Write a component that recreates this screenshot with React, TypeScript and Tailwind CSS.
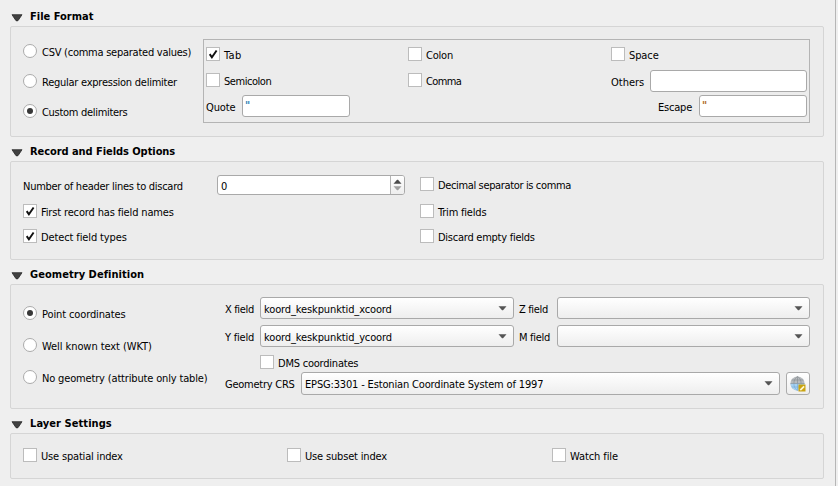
import type { ReactNode } from "react";

function Label({ children, className = "" }: { children: ReactNode; className?: string }) {
  return <span className={`block shrink-0 whitespace-nowrap ${className}`}>{children}</span>;
}

function Section({ title, headerClass, boxClass, titleClass = "", children }: { title: string; headerClass: string; boxClass: string; titleClass?: string; children: ReactNode }) {
  return (
    <section>
      <h2 className={`flex items-start pl-[11px] font-bold ${headerClass}`}>
        <svg width="12" height="8" viewBox="0 0 12 8" className="mt-[4px] mr-[7px] shrink-0">
          <path d="M1 .7h10L7.2 6.4q-1.2 1.2-2.4 0z" fill="#414141" stroke="#2b2b2b" strokeWidth=".8" />
        </svg>
        <Label className={titleClass}>{title}</Label>
      </h2>
      <div className={`ml-[10px] w-[814px] rounded-[2px] border border-[#d5d5d5] bg-[#ececec] ${boxClass}`}>{children}</div>
    </section>
  );
}

function Check({ label, checked = false, className = "", textClass = "" }: { label: string; checked?: boolean; className?: string; textClass?: string }) {
  return (
    <label className={`flex h-[14px] items-center ${className}`}>
      <span className="mr-[4px] h-[14px] w-[14px] shrink-0 border border-[#bcbcbc] bg-white">
        {checked && (
          <svg width="12" height="12" viewBox="0 0 12 12">
            <path d="M2.7 6.1l2.2 3.3L9.6 2.5" fill="none" stroke="#111" strokeWidth="1.9" />
          </svg>
        )}
      </span>
      <Label className={`mt-[4px] ${textClass}`}>{label}</Label>
    </label>
  );
}

function Radio({ label, checked = false, textClass = "" }: { label: string; checked?: boolean; textClass?: string }) {
  return (
    <label className="flex h-[14px] items-center">
      <span className="mr-[5px] flex h-[14px] w-[14px] shrink-0 items-center justify-center rounded-full border border-[#ababab] bg-white">
        {checked && <span className="h-[6px] w-[6px] rounded-full bg-[#383838]" />}
      </span>
      <Label className={`mt-[4px] ${textClass}`}>{label}</Label>
    </label>
  );
}

function Arrow({ className = "" }: { className?: string }) {
  return (
    <svg width="9" height="5" viewBox="0 0 9 5" className={`shrink-0 ${className}`}>
      <path d="M.5 .3h8L5 4.2h-1z" fill="currentColor" />
    </svg>
  );
}

function Combo({ value = "", className, textClass = "" }: { value?: string; className: string; textClass?: string }) {
  return (
    <div className={`flex shrink-0 items-center justify-between rounded-[3px] border border-[#a9a9a9] bg-linear-to-b from-white to-[#eeeeee] pr-[6px] pl-[3px] ${className}`}>
      <Label className={textClass}>{value}</Label>
      <Arrow className="text-[#555]" />
    </div>
  );
}

function Field({ value = "", className }: { value?: string; className: string }) {
  return <div className={`h-[22px] shrink-0 rounded-[3px] border border-[#a9a9a9] bg-white pl-[2px] leading-[20px] font-bold ${className}`}>{value}</div>;
}

function Globe() {
  return (
    <svg width="16" height="16" viewBox="0 0 16 16">
      <circle cx="7.5" cy="7.5" r="7" fill="#b7bbbe" />
      <path d="M.5 7.5h14a7 7 0 0 1-14 0z" fill="#a5d0f0" />
      <g fill="none" stroke="#858b90" strokeWidth=".6">
        <path d="M7.5 .5v7M.5 7.5h14M1.5 4h12" />
        <path d="M3.9 7.5c0-3 1.4-6 3.6-7c2.2 1 3.6 4 3.6 7" />
      </g>
      <path d="M1.5 11h12M7.5 7.5v7M3.9 7.5c0 3 1.4 6 3.6 7" fill="none" stroke="#72a9d6" strokeWidth=".6" />
      <rect x="8.5" y="8.5" width="7" height="7" fill="#c9a310" />
      <path d="M10.3 14.1l3.8-3.8" stroke="#fff7cf" strokeWidth="1.7" />
    </svg>
  );
}

export default function App() {
  return (
    <main className="h-[486px] w-[838px] overflow-hidden bg-[#efefef] pr-[2px] font-['DejaVu_Sans_Condensed','DejaVu_Sans',sans-serif] text-[11px] leading-[14px] text-black [font-stretch:condensed]">
      <div className="h-full border-r border-[#b6b6b6]">
        <Section title="File Format" headerClass="h-[26px] pt-[10px]" boxClass="flex h-[111px] pt-[12px] pl-[12px]">
          <div className="flex w-[180px] flex-col gap-[16px] pt-[5px]">
            <Radio label="CSV (comma separated values)" textClass="tracking-[-0.25px]" />
            <Radio label="Regular expression delimiter" textClass="tracking-[-0.25px]" />
            <Radio label="Custom delimiters" checked textClass="tracking-[-0.3px]" />
          </div>
          <div className="h-[84px] w-[607px] border border-[#b4b4b4] pt-[7px] pl-[2px]">
            <div className="flex h-[23px]">
              <Check label="Tab" checked className="w-[202px]" textClass="tracking-[0.3px]" />
              <Check label="Colon" className="w-[203px]" textClass="tracking-[-0.2px]" />
              <Check label="Space" textClass="tracking-[-0.1px]" />
            </div>
            <div className="flex h-[25px]">
              <Check label="Semicolon" className="mt-[3px] w-[202px]" textClass="tracking-[-0.45px]" />
              <Check label="Comma" className="mt-[3px] w-[203px]" textClass="tracking-[-0.6px]" />
              <Label className="mt-[6px] w-[39px]">Others</Label>
              <Field className="w-[157px]" />
            </div>
            <div className="flex items-center">
              <Label className="mt-[3px] w-[36px] tracking-[-0.1px]">Quote</Label>
              <Field value={'"'} className="w-[108px] text-[#2a7fb5]" />
              <Label className="mt-[3px] ml-[308px] w-[41px] tracking-[-0.2px]">Escape</Label>
              <Field value={'"'} className="w-[108px] text-[#b06a25]" />
            </div>
          </div>
        </Section>

        <Section title="Record and Fields Options" titleClass="tracking-[-0.06px]" headerClass="h-[24px] pt-[8px]" boxClass="flex h-[99px] pt-[13px] pl-[12px]">
          <div className="w-[397px]">
            <div className="flex h-[29px]">
              <Label className="mt-[5px] w-[194px] tracking-[-0.27px]">Number of header lines to discard</Label>
              <div className="flex h-[20px] w-[188px] overflow-hidden rounded-[3px] border border-[#a9a9a9] bg-white">
                <Label className="mt-[4px] w-[172px] pl-[3px]">0</Label>
                <div className="flex flex-1 flex-col items-center justify-center gap-[2px] border-l border-[#b4b4b4] bg-linear-to-b from-white to-[#eeeeee]">
                  <Arrow className="rotate-180 text-[#4b4b4b]" />
                  <Arrow className="text-[#a0a0a0]" />
                </div>
              </div>
            </div>
            <Check label="First record has field names" checked textClass="tracking-[-0.15px]" />
            <Check label="Detect field types" checked className="mt-[11px]" textClass="tracking-[-0.12px]" />
          </div>
          <div className="pt-[2px]">
            <Check label="Decimal separator is comma" textClass="tracking-[-0.36px]" />
            <Check label="Trim fields" className="mt-[13px]" textClass="tracking-[-0.2px]" />
            <Check label="Discard empty fields" className="mt-[11px]" textClass="tracking-[-0.25px]" />
          </div>
        </Section>

        <Section title="Geometry Definition" titleClass="tracking-[0.05px]" headerClass="h-[24px] pt-[8px]" boxClass="flex h-[125px] pt-[12px] pl-[12px]">
          <div className="flex w-[202px] flex-col gap-[18px] pt-[9px]">
            <Radio label="Point coordinates" checked textClass="tracking-[-0.12px]" />
            <Radio label="Well known text (WKT)" textClass="tracking-[-0.07px]" />
            <Radio label="No geometry (attribute only table)" textClass="tracking-[-0.16px]" />
          </div>
          <div className="w-[585px]">
            <div className="flex h-[28px]">
              <Label className="mt-[6px] w-[35px] tracking-[-0.35px]">X field</Label>
              <Combo value="koord_keskpunktid_xcoord" className="h-[22px] w-[254px]" textClass="mt-[4px] tracking-[-0.12px]" />
              <Label className="mt-[6px] ml-[5px] w-[38px] tracking-[-0.35px]">Z field</Label>
              <Combo className="h-[22px] w-[253px]" />
            </div>
            <div className="flex h-[30px]">
              <Label className="mt-[6px] w-[35px] tracking-[-0.2px]">Y field</Label>
              <Combo value="koord_keskpunktid_ycoord" className="h-[22px] w-[254px]" textClass="mt-[4px] tracking-[-0.12px]" />
              <Label className="mt-[6px] ml-[5px] w-[38px] tracking-[-0.3px]">M field</Label>
              <Combo className="h-[22px] w-[253px]" />
            </div>
            <Check label="DMS coordinates" className="ml-[35px]" textClass="tracking-[-0.22px]" />
            <div className="mt-[3px] flex">
              <Label className="mt-[6px] w-[76px] tracking-[-0.25px]">Geometry CRS</Label>
              <Combo value="EPSG:3301 - Estonian Coordinate System of 1997" className="h-[23px] w-[479px]" textClass="mt-[2px] tracking-[-0.16px]" />
              <div className="ml-[6px] flex h-[23px] w-[24px] items-center justify-center rounded-[3px] border border-[#ababab] bg-linear-to-b from-white to-[#eeeeee]">
                <Globe />
              </div>
            </div>
          </div>
        </Section>

        <Section title="Layer Settings" titleClass="tracking-[0.07px]" headerClass="h-[24px] pt-[8px]" boxClass="flex h-[46px] pt-[14px] pl-[12px]">
          <Check label="Use spatial index" className="w-[264px]" textClass="tracking-[-0.18px]" />
          <Check label="Use subset index" className="w-[265px]" textClass="tracking-[-0.17px]" />
          <Check label="Watch file" textClass="tracking-[-0.1px]" />
        </Section>
      </div>
    </main>
  );
}
